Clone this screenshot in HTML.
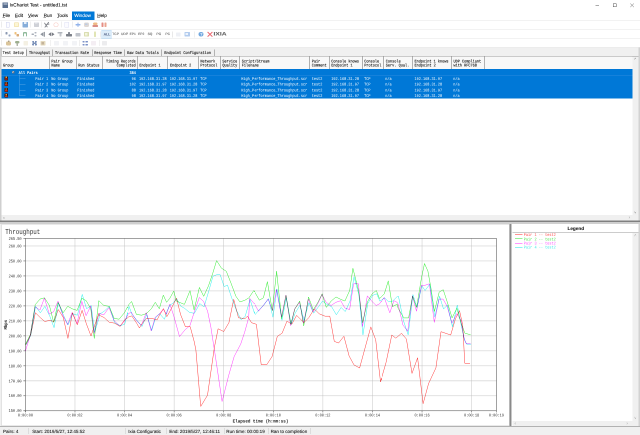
<!DOCTYPE html><html><head><meta charset="utf-8"><title>IxChariot Test - untitled1.tst</title><style>
html,body{margin:0;padding:0;background:#fff;}
body{width:640px;height:435px;overflow:hidden;position:relative;font-family:"Liberation Sans",sans-serif;}
#app{transform:scale(0.500000);transform-origin:0 0;will-change:transform;position:absolute;left:0;top:0;width:1280px;height:870px;overflow:hidden;}
#app div{position:absolute;}
.t{position:absolute;white-space:pre;line-height:1;text-rendering:geometricPrecision;transform:translateY(-50%);color:#000;}
.m{transform:translateY(calc(-50% + 2px)) scaleY(1.18);-webkit-text-stroke:0.18px currentColor;}
.w{-webkit-text-stroke:0;}
.s{font-family:"Liberation Sans",sans-serif;font-size:7.8px;-webkit-text-stroke:0.14px currentColor;}
.m{font-family:"Liberation Mono",monospace;font-size:7.1px;color:#111;}
.w{color:#fff;}
.b{font-weight:bold;}
svg{position:absolute;left:0;top:0;}
</style></head><body><div id="app">
<div style="left:5px;top:5.2px;width:11.2px;height:11.2px;background:#5a6f8f;"></div>
<div style="left:6.6px;top:6.8px;width:8px;height:2.4px;background:#cfd8e6;"></div>
<span class="t s" style="top:10.8px;left:19.2px;color:#000;font-size:9.5px;">IxChariot Test - untitled1.tst</span>
<div style="left:1191.4px;top:10.4px;width:6.8px;height:0.9px;background:#555;"></div>
<div style="left:1226.4px;top:7px;width:6.8px;height:6.8px;border:0.9px solid #555;box-sizing:border-box;"></div>
<svg width="1280" height="24" viewBox="0 0 640 12"><path d="M630.3 3.5 L633.9 7.1 M633.9 3.5 L630.3 7.1" stroke="#555" stroke-width="0.45" fill="none"/></svg>
<div style="left:144px;top:22.6px;width:44.6px;height:17.2px;background:#0078d7;"></div>
<span class="t s" style="top:31px;left:5.2px;color:#000;font-size:9.4px;">File</span>
<span class="t s" style="top:31px;left:30px;color:#000;font-size:9.4px;">Edit</span>
<span class="t s" style="top:31px;left:56px;color:#000;font-size:9.4px;">View</span>
<span class="t s" style="top:31px;left:87.2px;color:#000;font-size:9.4px;">Run</span>
<span class="t s" style="top:31px;left:114px;color:#000;font-size:9.4px;">Tools</span>
<span class="t s" style="top:31px;left:148.4px;color:#fff;font-size:9.4px;">Window</span>
<span class="t s" style="top:31px;left:194.4px;color:#000;font-size:9.4px;">Help</span>
<div style="left:5.2px;top:35px;width:4.4px;height:0.7px;background:#444;"></div>
<div style="left:30px;top:35px;width:4.8px;height:0.7px;background:#444;"></div>
<div style="left:56px;top:35px;width:5px;height:0.7px;background:#444;"></div>
<div style="left:87.2px;top:35px;width:5.2px;height:0.7px;background:#444;"></div>
<div style="left:114px;top:35px;width:4.4px;height:0.7px;background:#444;"></div>
<div style="left:194.4px;top:35px;width:5.4px;height:0.7px;background:#444;"></div>
<div style="left:0px;top:40.2px;width:1280px;height:1px;background:#e4e4e4;"></div>
<div style="left:0px;top:58.2px;width:1280px;height:1px;background:#e4e4e4;"></div>
<div style="left:0px;top:76px;width:1280px;height:1px;background:#e4e4e4;"></div>
<div style="left:0px;top:93.6px;width:1280px;height:1px;background:#e9e9e9;"></div>
<div style="left:2.8px;top:43px;width:1.2px;height:12px;background:#d8d8d8;"></div>
<div style="left:2.8px;top:61px;width:1.2px;height:12px;background:#d8d8d8;"></div>
<div style="left:2.8px;top:79px;width:1.2px;height:12px;background:#d8d8d8;"></div>
<div style="left:0;top:0;width:1280px;height:94px;opacity:0.68;">
<div style="left:11.6px;top:44.2px;width:7.6px;height:10.4px;background:#fbfbff;border-radius:0.8px;border:1px solid #b9bfe6;box-sizing:border-box;"></div>
<div style="left:28.4px;top:45px;width:10px;height:8.8px;background:#fbf0c0;border-radius:1.2px;border:1px solid #e3c766;box-sizing:border-box;"></div>
<div style="left:45.2px;top:44.2px;width:10.4px;height:10.4px;background:#4f88c9;border-radius:1.2px;"></div>
<div style="left:48px;top:44.2px;width:4.8px;height:4px;background:#dbe8f6;"></div>
<div style="left:61px;top:43.4px;width:0.8px;height:12px;background:#cfcfcf;"></div>
<div style="left:67.6px;top:45.4px;width:10px;height:8.4px;background:#b9bcc4;border-radius:1.2px;"></div>
<div style="left:70px;top:43.8px;width:5.2px;height:3.2px;background:#e6e8ee;"></div>
<div style="left:83.4px;top:43.4px;width:0.8px;height:12px;background:#cfcfcf;"></div>
<svg width="1280" height="96" viewBox="0 0 640 48"><path d="M45 27.099999999999998 L48.6 22.3 M44.6 23.099999999999998 L47.2 26.9 M46.6 24.5 L49 24.099999999999998" stroke="#4a4f58" stroke-width="0.9" fill="none" stroke-linecap="round"/></svg>
<div style="left:107px;top:44.6px;width:9.6px;height:9.6px;border-radius:4.8px;border:1.6px solid #f3a49a;box-sizing:border-box;"></div>
<div style="left:122.4px;top:43.4px;width:0.8px;height:12px;background:#cfcfcf;"></div>
<div style="left:128.6px;top:44.2px;width:9.2px;height:10.4px;background:#fafaff;border-radius:0.8px;border:1px solid #cfd0ee;box-sizing:border-box;"></div>
<div style="left:144px;top:43.4px;width:0.8px;height:12px;background:#cfcfcf;"></div>
<div style="left:151.2px;top:48.2px;width:9.6px;height:2.6px;background:#5f8fe0;border-radius:1.2px;"></div>
<div style="left:154.8px;top:44.6px;width:2.6px;height:9.6px;background:#5f8fe0;border-radius:1.2px;"></div>
<div style="left:167.6px;top:44.6px;width:10px;height:9.2px;background:#cfc6c2;border-radius:3px;"></div>
<div style="left:170px;top:46.6px;width:5.2px;height:3.2px;background:#9fb6d6;"></div>
<div style="left:185.6px;top:44.6px;width:9.6px;height:5.2px;background:#e79a4a;border-radius:2.6px;"></div>
<div style="left:185.2px;top:49.8px;width:10.4px;height:4.4px;background:#c9564a;border-radius:1.2px;"></div>
<div style="left:203.2px;top:44.6px;width:4.2px;height:9.6px;background:#d9584a;border-radius:1.2px;"></div>
<div style="left:208.6px;top:44.6px;width:4.2px;height:9.6px;background:#e07a5a;border-radius:1.2px;"></div>
<div style="left:10.8px;top:64.2px;width:4.4px;height:4.4px;background:#54688c;border-radius:1.2px;"></div>
<div style="left:16.8px;top:69px;width:4.4px;height:4.4px;background:#6a7da0;border-radius:1.2px;"></div>
<div style="left:28.6px;top:63.8px;width:4.8px;height:5.2px;background:#e8a33c;border-radius:1.2px;"></div>
<div style="left:32.8px;top:67.8px;width:5.2px;height:5.6px;background:#c9853a;border-radius:1.2px;"></div>
<div style="left:45.6px;top:63.8px;width:8.8px;height:9.6px;background:#5c9a6c;border-radius:2px;"></div>
<div style="left:48.4px;top:66.6px;width:3.2px;height:6.8px;background:#fff;"></div>
<div style="left:63.2px;top:67.4px;width:4.4px;height:2.6px;background:#7f8796;border-radius:1.2px;"></div>
<div style="left:69.2px;top:64px;width:3.4px;height:3px;background:#8a92a0;border-radius:1.2px;"></div>
<div style="left:69.2px;top:70.4px;width:3.4px;height:3px;background:#8a92a0;border-radius:1.2px;"></div>
<svg width="1280" height="96" viewBox="0 0 640 48"><path d="M43.6 31.999999999999996 L40.3 34.3 L43.6 36.599999999999994 Z" fill="#5b6370"/><path d="M44.5 31.9 v4.8" stroke="#5b6370" stroke-width="0.9"/><path d="M51.1 32.3 L48.3 34.3 L51.1 36.3 Z M51.7 32.3 L54.5 34.3 L51.7 36.3 Z" fill="#3a3f4a"/></svg>
<div style="left:115.2px;top:64px;width:10px;height:2.8px;background:#8d939c;border-radius:1.2px;"></div>
<div style="left:119.2px;top:66.6px;width:4px;height:6.8px;background:#a9aeb6;border-radius:1.2px;"></div>
<div style="left:132.4px;top:68.2px;width:11.6px;height:5px;background:#3f4550;border-radius:1.2px;"></div>
<div style="left:136.4px;top:63.8px;width:3.6px;height:4.8px;background:#4d5360;border-radius:1.2px;"></div>
<div style="left:151.2px;top:66.2px;width:9.6px;height:6.8px;background:#a3a8b3;border-radius:1.2px;"></div>
<div style="left:168px;top:63.8px;width:9.6px;height:9.6px;background:#c9cf8c;border-radius:1.2px;"></div>
<div style="left:170.4px;top:66px;width:4.8px;height:5.2px;background:#eef0cf;"></div>
<div style="left:188.4px;top:63.4px;width:3.2px;height:10.8px;background:#d3d993;border-radius:1.2px;"></div>
<div style="left:201.2px;top:62.6px;width:0.8px;height:12px;background:#cfcfcf;"></div>
<div style="left:204.4px;top:60.6px;width:17.2px;height:16.2px;background:#cce4f7;outline:0.8px solid #9ccaf0;outline-offset:-0.8px;"></div>
<span class="t s" style="top:69px;left:207.2px;color:#0a1f55;font-size:7px;font-weight:bold;">ALL</span>
<span class="t s" style="top:69px;left:224.6px;color:#000;font-size:6.6px;">TCP</span>
<span class="t s" style="top:69px;left:242px;color:#000;font-size:6.6px;">UDP</span>
<span class="t s" style="top:69px;left:259.2px;color:#000;font-size:6.6px;">EP1</span>
<span class="t s" style="top:69px;left:276.2px;color:#000;font-size:6.6px;">EP2</span>
<span class="t s" style="top:69px;left:295.2px;color:#000;font-size:6.6px;">SQ</span>
<span class="t s" style="top:69px;left:312.8px;color:#000;font-size:6.6px;">PG</span>
<span class="t s" style="top:69px;left:330.8px;color:#000;font-size:6.6px;">PC</span>
<div style="left:344.4px;top:62.6px;width:0.8px;height:12px;background:#bdbdbd;"></div>
<div style="left:352px;top:64.6px;width:8.8px;height:8px;background:#e6e9f0;border-radius:1.2px;"></div>
<div style="left:369.2px;top:63.8px;width:10.4px;height:9.6px;background:#8fb4e6;border-radius:1.2px;"></div>
<div style="left:371.2px;top:65.8px;width:4.8px;height:4px;background:#e4eefb;"></div>
<div style="left:389.4px;top:62.6px;width:0.8px;height:12px;background:#cfcfcf;"></div>
<div style="left:397.2px;top:63.8px;width:9.6px;height:9.6px;background:#2f7fd0;border-radius:4.8px;"></div>
<span class="t s" style="top:68.8px;left:400.4px;color:#fff;font-size:7.2px;font-weight:bold;">?</span>
<svg width="1280" height="96" viewBox="0 0 640 48"><path d="M207.6 31.999999999999996 L212.4 36.599999999999994 M212.4 31.999999999999996 L207.6 36.599999999999994" stroke="#e0222f" stroke-width="1.0" fill="none"/></svg>
<span class="t s" style="top:68.7px;left:426.6px;color:#111;font-size:10px;font-weight:bold;transform-origin:0 50%;transform:translateY(-50%) scaleX(1.34);">IXIA</span>
<div style="left:12.4px;top:83.2px;width:9.6px;height:8px;background:#c9a86a;border-radius:2.4px;"></div>
<div style="left:15.6px;top:81px;width:3.6px;height:3.2px;background:#7b6a4a;border-radius:1.2px;"></div>
<div style="left:30.4px;top:81.6px;width:8.4px;height:5.2px;background:#6f8a5a;border-radius:2.4px;"></div>
<div style="left:32.8px;top:86.4px;width:3.2px;height:5.2px;background:#8a8f7a;border-radius:1.2px;"></div>
<div style="left:47.2px;top:82px;width:8.8px;height:9.2px;background:#efe9d6;border-radius:1.2px;"></div>
<div style="left:64px;top:81.6px;width:10px;height:9.6px;background:#3f5f9a;border-radius:2px;"></div>
<div style="left:67.8px;top:81.6px;width:2.4px;height:3.2px;background:#fff;"></div>
<div style="left:67.8px;top:88px;width:2.4px;height:3.2px;background:#fff;"></div>
<div style="left:64px;top:85.4px;width:2.4px;height:2px;background:#fff;"></div>
<div style="left:71.6px;top:85.4px;width:2.4px;height:2px;background:#fff;"></div>
<div style="left:80.8px;top:81.8px;width:10px;height:9.6px;background:#d9c9a0;border-radius:1.2px;"></div>
<div style="left:83.2px;top:84.4px;width:5.2px;height:4.4px;background:#a88f6a;"></div>
<div style="left:101.2px;top:80.4px;width:0.8px;height:12px;background:#d5d5d5;"></div>
<div style="left:108px;top:81.8px;width:10px;height:9.6px;background:#eceef2;border-radius:1.2px;"></div>
<div style="left:126px;top:81.8px;width:10px;height:9.6px;background:#eceef2;border-radius:1.2px;"></div>
<div style="left:143.6px;top:81.8px;width:10px;height:9.6px;background:#eceef2;border-radius:1.2px;"></div>
<div style="left:159px;top:80.4px;width:0.8px;height:12px;background:#cfcfcf;"></div>
<div style="left:164.8px;top:82.2px;width:10.8px;height:3px;background:#3f5fae;border-radius:1.2px;"></div>
<div style="left:164.8px;top:87.8px;width:10.8px;height:3px;background:#3f5fae;border-radius:1.2px;"></div>
<div style="left:169.4px;top:82.2px;width:1.6px;height:8.6px;background:#fff;"></div>
<div style="left:182.4px;top:81.8px;width:9.6px;height:9.6px;background:#efe6ee;border-radius:1.2px;"></div>
<div style="left:198px;top:80.4px;width:0.8px;height:12px;background:#d5d5d5;"></div>
<div style="left:204.4px;top:82px;width:9.6px;height:9.2px;background:#e4e4e6;border-radius:1.2px;"></div>
</div>
<div style="left:0px;top:95.2px;width:1280px;height:17.2px;background:#f0f0f0;"></div>
<div style="left:2.8px;top:96.4px;width:50px;height:16px;background:#fcfcfc;border:0.7px solid #c4c4c4;border-bottom:none;box-sizing:border-box;"></div>
<span class="t m" style="top:104.6px;left:5.2px;">Test Setup</span>
<span class="t m" style="top:104.6px;left:58px;">Throughput</span>
<span class="t m" style="top:104.6px;left:110px;">Transaction Rate</span>
<span class="t m" style="top:104.6px;left:188.4px;">Response Time</span>
<span class="t m" style="top:104.6px;left:254px;">Raw Data Totals</span>
<span class="t m" style="top:104.6px;left:328.4px;">Endpoint Configuration</span>
<div style="left:53.2px;top:98.8px;width:0.8px;height:12.8px;background:#777;"></div>
<div style="left:104.2px;top:98.8px;width:0.8px;height:12.8px;background:#777;"></div>
<div style="left:183.8px;top:98.8px;width:0.8px;height:12.8px;background:#777;"></div>
<div style="left:247.6px;top:98.8px;width:0.8px;height:12.8px;background:#777;"></div>
<div style="left:322.8px;top:98.8px;width:0.8px;height:12.8px;background:#777;"></div>
<div style="left:428.2px;top:98.8px;width:0.8px;height:12.8px;background:#777;"></div>
<div style="left:2.8px;top:112.2px;width:1274px;height:26.2px;background:#f8f8f8;border-top:1.1px solid #959595;box-sizing:border-box;"></div>
<div style="left:2.8px;top:113px;width:1261.6px;height:1.2px;background:#fff;"></div>
<div style="left:98.2px;top:112.8px;width:1.1px;height:26px;background:#666;"></div>
<div style="left:99.3px;top:112.8px;width:1px;height:26px;background:#fff;"></div>
<div style="left:151.6px;top:112.8px;width:1.1px;height:26px;background:#666;"></div>
<div style="left:152.7px;top:112.8px;width:1px;height:26px;background:#fff;"></div>
<div style="left:204.2px;top:112.8px;width:1.1px;height:26px;background:#666;"></div>
<div style="left:205.3px;top:112.8px;width:1px;height:26px;background:#fff;"></div>
<div style="left:274px;top:112.8px;width:1.1px;height:26px;background:#666;"></div>
<div style="left:275.1px;top:112.8px;width:1px;height:26px;background:#fff;"></div>
<div style="left:334.4px;top:112.8px;width:1.1px;height:26px;background:#666;"></div>
<div style="left:335.5px;top:112.8px;width:1px;height:26px;background:#fff;"></div>
<div style="left:396.6px;top:112.8px;width:1.1px;height:26px;background:#666;"></div>
<div style="left:397.7px;top:112.8px;width:1px;height:26px;background:#fff;"></div>
<div style="left:440px;top:112.8px;width:1.1px;height:26px;background:#666;"></div>
<div style="left:441.1px;top:112.8px;width:1px;height:26px;background:#fff;"></div>
<div style="left:478.4px;top:112.8px;width:1.1px;height:26px;background:#666;"></div>
<div style="left:479.5px;top:112.8px;width:1px;height:26px;background:#fff;"></div>
<div style="left:618.6px;top:112.8px;width:1.1px;height:26px;background:#666;"></div>
<div style="left:619.7px;top:112.8px;width:1px;height:26px;background:#fff;"></div>
<div style="left:657.8px;top:112.8px;width:1.1px;height:26px;background:#666;"></div>
<div style="left:658.9px;top:112.8px;width:1px;height:26px;background:#fff;"></div>
<div style="left:724.4px;top:112.8px;width:1.1px;height:26px;background:#666;"></div>
<div style="left:725.5px;top:112.8px;width:1px;height:26px;background:#fff;"></div>
<div style="left:767.2px;top:112.8px;width:1.1px;height:26px;background:#666;"></div>
<div style="left:768.3px;top:112.8px;width:1px;height:26px;background:#fff;"></div>
<div style="left:824.2px;top:112.8px;width:1.1px;height:26px;background:#666;"></div>
<div style="left:825.3px;top:112.8px;width:1px;height:26px;background:#fff;"></div>
<div style="left:902.2px;top:112.8px;width:1.1px;height:26px;background:#666;"></div>
<div style="left:903.3px;top:112.8px;width:1px;height:26px;background:#fff;"></div>
<div style="left:968.2px;top:112.8px;width:1.1px;height:26px;background:#666;"></div>
<div style="left:969.3px;top:112.8px;width:1px;height:26px;background:#fff;"></div>
<span class="t m" style="top:130.2px;left:6px;">Group</span>
<span class="t m" style="top:121.6px;left:102.8px;">Pair Group</span>
<span class="t m" style="top:130.2px;left:102.8px;">Name</span>
<span class="t m" style="top:130.2px;left:156.4px;">Run Status</span>
<span class="t m" style="top:130.2px;left:278.8px;">Endpoint 1</span>
<span class="t m" style="top:130.2px;left:340px;">Endpoint 2</span>
<span class="t m" style="top:121.6px;left:400.8px;">Network</span>
<span class="t m" style="top:130.2px;left:400.8px;">Protocol</span>
<span class="t m" style="top:121.6px;left:444.8px;">Service</span>
<span class="t m" style="top:130.2px;left:444.8px;">Quality</span>
<span class="t m" style="top:121.6px;left:483.4px;">Script/Stream</span>
<span class="t m" style="top:130.2px;left:483.4px;">Filename</span>
<span class="t m" style="top:121.6px;left:623.4px;">Pair</span>
<span class="t m" style="top:130.2px;left:623.4px;">Comment</span>
<span class="t m" style="top:121.6px;left:662.6px;">Console knows</span>
<span class="t m" style="top:130.2px;left:662.6px;">Endpoint 1</span>
<span class="t m" style="top:121.6px;left:728.4px;">Console</span>
<span class="t m" style="top:130.2px;left:728.4px;">Protocol</span>
<span class="t m" style="top:121.6px;left:771.6px;">Console</span>
<span class="t m" style="top:130.2px;left:771.6px;">Serv. Qual.</span>
<span class="t m" style="top:121.6px;left:829px;">Endpoint 1 knows</span>
<span class="t m" style="top:130.2px;left:829px;">Endpoint 2</span>
<span class="t m" style="top:121.6px;left:907px;">UDP Compliant</span>
<span class="t m" style="top:130.2px;left:907px;">with RFC768</span>
<span class="t m" style="top:121.6px;right:1008.4px;">Timing Records</span>
<span class="t m" style="top:130.2px;right:1008.4px;">Completed</span>
<div style="left:2.6px;top:138.4px;width:1262px;height:58.2px;background:#0078d7;"></div>
<div style="left:3.2px;top:149.8px;width:1261.4px;height:0.7px;background:#2a8be0;"></div>
<div style="left:24.2px;top:142.4px;width:5px;height:5px;background:#e8eef6;border:0.8px solid #5a6a80;box-sizing:border-box;"></div>
<div style="left:25.6px;top:144.6px;width:2.2px;height:0.8px;background:#223;"></div>
<span class="t m w b" style="top:145px;left:37.2px;">All Pairs</span>
<span class="t m w b" style="top:145px;right:1008.2px;">384</span>
<div style="left:39.2px;top:149.2px;width:0.8px;height:42.4px;background:#b8d6f3;opacity:.45;"></div>
<div style="left:39.2px;top:156.6px;width:11.6px;height:0.8px;background:#b8d6f3;opacity:.45;"></div>
<div style="left:9.4px;top:152.6px;width:6.2px;height:8px;background:#3a1512;border-radius:1.2px;"></div>
<div style="left:10.6px;top:153.4px;width:3.8px;height:2.4px;background:#e89a2a;"></div>
<div style="left:10.4px;top:156.8px;width:4.2px;height:2.6px;background:#c8301c;"></div>
<span class="t m w" style="top:156.6px;right:1183.6px;">Pair 1</span>
<span class="t m w" style="top:156.6px;left:102.6px;">No Group</span>
<span class="t m w" style="top:156.6px;left:154.6px;">Finished</span>
<span class="t m w" style="top:156.6px;right:1008.2px;">96</span>
<span class="t m w" style="top:156.6px;left:278px;">192.168.31.28</span>
<span class="t m w" style="top:156.6px;left:339.4px;">192.168.31.97</span>
<span class="t m w" style="top:156.6px;left:400.6px;">TCP</span>
<span class="t m w" style="top:156.6px;left:482.6px;">High_Performance_Throughput.scr</span>
<span class="t m w" style="top:156.6px;left:623.4px;">test2</span>
<span class="t m w" style="top:156.6px;left:662.6px;">192.168.31.28</span>
<span class="t m w" style="top:156.6px;left:728.2px;">TCP</span>
<span class="t m w" style="top:156.6px;left:770.6px;">n/a</span>
<span class="t m w" style="top:156.6px;left:829px;">192.168.31.97</span>
<span class="t m w" style="top:156.6px;left:906.4px;">n/a</span>
<div style="left:39.2px;top:168.2px;width:11.6px;height:0.8px;background:#b8d6f3;opacity:.45;"></div>
<div style="left:9.4px;top:164.2px;width:6.2px;height:8px;background:#3a1512;border-radius:1.2px;"></div>
<div style="left:10.6px;top:165px;width:3.8px;height:2.4px;background:#e89a2a;"></div>
<div style="left:10.4px;top:168.4px;width:4.2px;height:2.6px;background:#c8301c;"></div>
<span class="t m w" style="top:168.2px;right:1183.6px;">Pair 2</span>
<span class="t m w" style="top:168.2px;left:102.6px;">No Group</span>
<span class="t m w" style="top:168.2px;left:154.6px;">Finished</span>
<span class="t m w" style="top:168.2px;right:1008.2px;">102</span>
<span class="t m w" style="top:168.2px;left:278px;">192.168.31.97</span>
<span class="t m w" style="top:168.2px;left:339.4px;">192.168.31.28</span>
<span class="t m w" style="top:168.2px;left:400.6px;">TCP</span>
<span class="t m w" style="top:168.2px;left:482.6px;">High_Performance_Throughput.scr</span>
<span class="t m w" style="top:168.2px;left:623.4px;">test2</span>
<span class="t m w" style="top:168.2px;left:662.6px;">192.168.31.97</span>
<span class="t m w" style="top:168.2px;left:728.2px;">TCP</span>
<span class="t m w" style="top:168.2px;left:770.6px;">n/a</span>
<span class="t m w" style="top:168.2px;left:829px;">192.168.31.28</span>
<span class="t m w" style="top:168.2px;left:906.4px;">n/a</span>
<div style="left:39.2px;top:179.8px;width:11.6px;height:0.8px;background:#b8d6f3;opacity:.45;"></div>
<div style="left:9.4px;top:175.8px;width:6.2px;height:8px;background:#3a1512;border-radius:1.2px;"></div>
<div style="left:10.6px;top:176.6px;width:3.8px;height:2.4px;background:#e89a2a;"></div>
<div style="left:10.4px;top:180px;width:4.2px;height:2.6px;background:#c8301c;"></div>
<span class="t m w" style="top:179.8px;right:1183.6px;">Pair 3</span>
<span class="t m w" style="top:179.8px;left:102.6px;">No Group</span>
<span class="t m w" style="top:179.8px;left:154.6px;">Finished</span>
<span class="t m w" style="top:179.8px;right:1008.2px;">88</span>
<span class="t m w" style="top:179.8px;left:278px;">192.168.31.28</span>
<span class="t m w" style="top:179.8px;left:339.4px;">192.168.31.97</span>
<span class="t m w" style="top:179.8px;left:400.6px;">TCP</span>
<span class="t m w" style="top:179.8px;left:482.6px;">High_Performance_Throughput.scr</span>
<span class="t m w" style="top:179.8px;left:623.4px;">test2</span>
<span class="t m w" style="top:179.8px;left:662.6px;">192.168.31.28</span>
<span class="t m w" style="top:179.8px;left:728.2px;">TCP</span>
<span class="t m w" style="top:179.8px;left:770.6px;">n/a</span>
<span class="t m w" style="top:179.8px;left:829px;">192.168.31.97</span>
<span class="t m w" style="top:179.8px;left:906.4px;">n/a</span>
<div style="left:39.2px;top:191.4px;width:11.6px;height:0.8px;background:#b8d6f3;opacity:.45;"></div>
<div style="left:9.4px;top:187.4px;width:6.2px;height:8px;background:#3a1512;border-radius:1.2px;"></div>
<div style="left:10.6px;top:188.2px;width:3.8px;height:2.4px;background:#e89a2a;"></div>
<div style="left:10.4px;top:191.6px;width:4.2px;height:2.6px;background:#c8301c;"></div>
<span class="t m w" style="top:191.4px;right:1183.6px;">Pair 4</span>
<span class="t m w" style="top:191.4px;left:102.6px;">No Group</span>
<span class="t m w" style="top:191.4px;left:154.6px;">Finished</span>
<span class="t m w" style="top:191.4px;right:1008.2px;">98</span>
<span class="t m w" style="top:191.4px;left:278px;">192.168.31.97</span>
<span class="t m w" style="top:191.4px;left:339.4px;">192.168.31.28</span>
<span class="t m w" style="top:191.4px;left:400.6px;">TCP</span>
<span class="t m w" style="top:191.4px;left:482.6px;">High_Performance_Throughput.scr</span>
<span class="t m w" style="top:191.4px;left:623.4px;">test2</span>
<span class="t m w" style="top:191.4px;left:662.6px;">192.168.31.97</span>
<span class="t m w" style="top:191.4px;left:728.2px;">TCP</span>
<span class="t m w" style="top:191.4px;left:770.6px;">n/a</span>
<span class="t m w" style="top:191.4px;left:829px;">192.168.31.28</span>
<span class="t m w" style="top:191.4px;left:906.4px;">n/a</span>
<div style="left:0px;top:95.2px;width:2.6px;height:353.2px;background:#cfcfcf;"></div>
<div style="left:1264.6px;top:112.8px;width:12.6px;height:328.8px;background:#f0f0f0;"></div>
<div style="left:1277px;top:95.2px;width:3px;height:353.2px;background:#d2d2d2;"></div>
<div style="left:3px;top:430.2px;width:1274.2px;height:11.4px;background:#f0f0f0;"></div>
<span class="t s" style="top:435.8px;left:6.4px;color:#888;font-size:8px;">‹</span>
<span class="t s" style="top:435.4px;left:1257.6px;color:#aaa;font-size:8px;">›</span>
<span class="t s" style="top:118.4px;left:1268.2px;color:#999;font-size:7.2px;">˄</span>
<span class="t s" style="top:425px;left:1268.2px;color:#999;font-size:7.2px;">˅</span>
<div style="left:0px;top:441.4px;width:1280px;height:2.6px;background:#808080;"></div>
<div style="left:0px;top:444px;width:1280px;height:4.4px;background:#cfcfcf;"></div>
<div style="left:0px;top:448.4px;width:1280px;height:404.6px;background:#f0f0f0;"></div>
<div style="left:2.6px;top:448.4px;width:1015.2px;height:404px;background:#fff;border:0.8px solid #d4d4d4;box-sizing:border-box;"></div>
<div style="left:1017.8px;top:448.4px;width:1.6px;height:404.6px;background:#e4e4e4;"></div>
<div style="left:1019.4px;top:448.4px;width:2.4px;height:404.6px;background:#8a8a8a;"></div>
<div style="left:1021.8px;top:448.4px;width:2.2px;height:404.6px;background:#c8c8c8;"></div>
<div style="left:1024px;top:448.4px;width:256px;height:404.6px;background:#fff;"></div>
<div style="left:1024.6px;top:464.6px;width:255.4px;height:1px;background:#9a9a9a;"></div>
<div style="left:1024.6px;top:465.6px;width:240.4px;height:376.4px;background:#fff;"></div>
<div style="left:1264.8px;top:465.6px;width:12.8px;height:376.8px;background:#f0f0f0;"></div>
<div style="left:1024.6px;top:841.8px;width:252.8px;height:10.6px;background:#f0f0f0;"></div>
<div style="left:1277.2px;top:448.4px;width:2.8px;height:404.6px;background:#d2d2d2;"></div>
<span class="t s b" style="top:456.6px;left:1151.6px;color:#111;font-size:9.4px;transform:translate(-50%,-50%);">Legend</span>
<span class="t s" style="top:470.8px;left:1268.4px;color:#aaa;font-size:7.2px;">˄</span>
<span class="t s" style="top:836px;left:1268.4px;color:#aaa;font-size:7.2px;">˅</span>
<span class="t s" style="top:847px;left:1029px;color:#aaa;font-size:8px;">‹</span>
<span class="t s" style="top:847px;left:1253px;color:#aaa;font-size:8px;">›</span>
<div style="left:1030px;top:469.1px;width:14.6px;height:0.9px;background:#ff2a2a;"></div>
<span class="t m" style="top:469.4px;left:1047.6px;color:#ff2a2a;-webkit-text-stroke:0;opacity:.85;">Pair 1 -- test2</span>
<div style="left:1030px;top:477.3px;width:14.6px;height:0.9px;background:#2fe02f;"></div>
<span class="t m" style="top:477.6px;left:1047.6px;color:#2fe02f;-webkit-text-stroke:0;opacity:.85;">Pair 2 -- test2</span>
<div style="left:1030px;top:485.5px;width:14.6px;height:0.9px;background:#ff30ff;"></div>
<span class="t m" style="top:485.8px;left:1047.6px;color:#ff30ff;-webkit-text-stroke:0;opacity:.85;">Pair 3 -- test2</span>
<div style="left:1030px;top:493.7px;width:14.6px;height:0.9px;background:#20e6e6;"></div>
<span class="t m" style="top:494px;left:1047.6px;color:#20e6e6;-webkit-text-stroke:0;opacity:.85;">Pair 4 -- test2</span>
<svg width="1280" height="870" viewBox="0 0 640 435"><g stroke="#bcbcbc" stroke-width="0.42" fill="none"><path d="M25.4 395.81 H496.5"/><path d="M25.4 380.83 H496.5"/><path d="M25.4 365.85 H496.5"/><path d="M25.4 350.86 H496.5"/><path d="M25.4 335.88 H496.5"/><path d="M25.4 320.89 H496.5"/><path d="M25.4 305.91 H496.5"/><path d="M25.4 290.92 H496.5"/><path d="M25.4 275.94 H496.5"/><path d="M25.4 260.95 H496.5"/><path d="M25.4 245.97 H496.5"/><path d="M74.98 238.4 V410.8"/><path d="M124.56 238.4 V410.8"/><path d="M174.14 238.4 V410.8"/><path d="M223.72 238.4 V410.8"/><path d="M273.3 238.4 V410.8"/><path d="M322.88 238.4 V410.8"/><path d="M372.46 238.4 V410.8"/><path d="M422.04 238.4 V410.8"/><path d="M471.62 238.4 V410.8"/></g><g stroke="#444" stroke-width="0.5" fill="none"><path d="M25.4 238.4 V412.0 M23.4 410.8 H496.5 V238.4 H23.4"/><path d="M23.4 410.8 H25.4"/><path d="M23.4 395.81 H25.4"/><path d="M23.4 380.83 H25.4"/><path d="M23.4 365.85 H25.4"/><path d="M23.4 350.86 H25.4"/><path d="M23.4 335.88 H25.4"/><path d="M23.4 320.89 H25.4"/><path d="M23.4 305.91 H25.4"/><path d="M23.4 290.92 H25.4"/><path d="M23.4 275.94 H25.4"/><path d="M23.4 260.95 H25.4"/><path d="M23.4 245.97 H25.4"/><path d="M25.4 410.8 v1.6"/><path d="M74.98 410.8 v1.6"/><path d="M124.56 410.8 v1.6"/><path d="M174.14 410.8 v1.6"/><path d="M223.72 410.8 v1.6"/><path d="M273.3 410.8 v1.6"/><path d="M322.88 410.8 v1.6"/><path d="M372.46 410.8 v1.6"/><path d="M422.04 410.8 v1.6"/><path d="M471.62 410.8 v1.6"/><path d="M496.41 410.8 v1.6"/></g><g fill="none" stroke-width="0.5" stroke-linejoin="round"><polyline stroke="#ff3b3b" style="mix-blend-mode:multiply" points="25.7,344.9 30.6,335.2 35.4,312.7 40.2,317.5 44.7,321.5 49.6,320.4 53.9,321.5 58.3,309.5 63.3,317.5 67.9,338.4 72.4,312.7 77.3,324.8 82.1,310.3 86.4,323.9 91.0,336.0 94.5,325.6 99.0,313.5 99.1,315.1 104.0,317.5 109.3,322.3 114.4,323.1 120.1,326.4 124.6,319.9 128.9,316.7 131.8,315.9 136.6,323.1 139.4,328.0 141.8,323.9 146.6,318.3 151.5,318.3 157.1,319.9 159.5,315.1 163.5,308.6 166.8,316.7 170.0,311.1 176.5,298.2 180.6,314.6 185.4,326.7 190.2,326.7 194.3,342.0 195.9,350.1 200.7,406.5 207.5,395.2 214.4,347.3 218.1,328.8 223.7,331.5 228.9,322.7 233.7,299.3 238.5,317.8 245.1,318.6 247.5,316.2 251.5,322.7 256.4,324.3 261.2,364.6 266.8,364.6 272.1,356.5 277.3,336.4 282.1,333.2 287.0,321.1 291.8,324.2 296.6,315.4 300.7,319.4 303.9,322.6 308.7,317.8 314.3,308.9 319.2,313.8 325.1,316.2 329.8,316.2 331.4,325.3 334.3,341.4 338.6,343.0 343.9,336.3 349.1,355.9 353.9,364.8 359.6,368.0 370.8,326.9 375.7,339.8 380.5,381.7 386.1,362.3 391.8,335.0 395.8,338.2 401.5,333.3 406.4,339.0 412.0,373.4 417.6,357.8 423.1,403.7 428.6,383.5 435.9,367.9 441.0,331.7 450.7,335.0 455.5,318.6 459.5,310.6 462.7,325.1 464.8,363.3 470.0,363.3"/><polyline stroke="#35ee35" style="mix-blend-mode:multiply" points="25.5,344.2 30.4,334.5 35.2,304.7 40.0,299.1 44.5,297.8 49.4,305.5 53.7,322.4 58.1,302.3 63.1,312.8 67.7,306.3 72.2,308.8 77.1,310.4 81.9,298.3 86.2,300.7 90.8,308.8 94.3,338.5 98.8,300.7 103.8,305.5 109.1,306.3 114.2,318.4 119.1,319.2 124.4,312.8 128.7,304.7 131.6,301.5 136.4,314.4 141.6,315.2 146.4,313.6 151.3,308.8 155.3,302.3 159.3,308.8 163.3,295.1 166.6,302.3 169.8,298.3 173.8,291.0 176.3,301.1 180.4,302.7 184.4,304.4 190.0,290.7 194.1,310.0 199.4,287.4 203.7,296.3 208.5,285.8 212.6,273.8 216.6,260.6 221.4,268.1 226.3,271.3 231.1,283.4 235.9,296.3 239.9,301.9 244.8,300.3 248.9,297.8 253.8,290.5 259.4,300.2 263.4,297.8 267.4,281.7 272.3,310.7 276.6,271.2 281.6,318.7 286.0,295.4 290.8,324.4 294.8,309.1 299.7,301.0 303.7,326.0 308.5,297.0 313.3,309.9 318.2,301.8 322.2,293.8 322.3,294.6 326.3,307.4 331.2,301.0 336.0,297.0 340.8,299.4 344.9,301.0 349.7,290.5 352.9,268.3 358.5,290.5 362.6,322.7 367.4,301.8 372.2,293.8 376.3,290.5 379.5,298.6 384.3,293.8 388.3,280.9 392.4,306.6 397.2,304.2 398.1,308.2 403.8,317.9 408.6,317.9 412.6,296.2 416.6,307.4 421.5,277.7 424.5,263.5 427.9,271.2 431.1,288.9 434.4,311.5 439.2,292.1 443.2,289.7 447.2,301.8 452.1,317.9 456.9,308.2 460.9,322.7 464.9,333.2 470.6,334.8"/><polyline stroke="#ff3bff" style="mix-blend-mode:multiply" points="25.4,351.1 30.3,335.0 35.1,306.8 39.9,310.1 44.4,298.0 49.3,314.1 53.6,311.7 58.0,301.2 63.0,315.7 67.6,324.6 72.1,312.5 77.0,323.7 81.8,301.2 86.1,315.7 90.7,306.0 94.2,333.4 98.7,314.1 98.8,313.3 103.7,314.9 109.0,307.6 114.1,320.5 119.8,326.2 124.3,321.3 128.6,313.3 131.5,312.5 136.3,320.5 141.5,325.4 146.3,312.5 151.2,331.0 155.2,317.3 159.2,314.1 163.2,309.3 166.5,314.1 169.7,304.4 169.8,304.0 173.8,316.0 179.5,336.6 185.1,329.7 189.9,325.7 194.0,312.8 199.3,297.5 203.6,301.5 207.6,311.2 210.9,327.3 214.1,348.2 214.9,353.1 222.1,401.5 228.6,375.7 234.2,356.4 240.7,344.1 244.7,332.1 248.7,317.6 249.6,298.3 254.5,303.9 258.5,311.2 263.3,305.5 268.1,299.1 272.5,310.4 276.5,289.4 281.5,316.8 285.9,295.1 290.7,325.7 294.7,308.7 299.6,302.3 303.6,323.2 308.4,299.1 313.2,312.0 318.1,303.1 322.1,294.3 322.2,295.1 326.2,302.3 331.1,305.5 335.9,302.3 340.7,300.7 344.8,307.9 349.6,309.6 353.6,283.8 358.4,283.8 362.5,326.5 367.3,295.9 372.1,301.5 376.2,305.5 379.4,303.9 384.2,297.5 389.8,312.8 393.9,300.7 397.1,302.3 398.0,303.9 402.9,324.9 407.7,331.3 412.5,295.9 416.5,311.2 421.4,285.4 424.6,285.4 429.4,283.8 434.3,322.4 439.1,299.1 443.1,299.1 447.1,306.3 452.0,323.2 456.8,313.6 460.8,320.0 464.1,338.1 466.3,343.8 470.6,343.8"/><polyline stroke="#2ff0f0" style="mix-blend-mode:multiply" points="25.85,345.05 30.75,335.35 35.55,306.35 40.35,312.85 44.85,306.35 49.75,316.05 54.05,327.65 58.45,303.15 63.45,315.25 68.05,324.95 72.55,313.65 77.45,315.25 82.25,294.35 86.55,308.75 91.15,305.55 94.65,332.15 99.15,317.65 99.25,314.45 104.15,311.25 109.45,306.35 114.55,322.45 120.25,325.75 124.75,324.05 129.05,306.35 131.95,314.45 136.75,320.05 141.95,326.55 146.75,314.45 151.65,330.55 155.65,317.65 159.65,313.65 164.45,319.25 166.95,311.25 170.15,304.75 172.65,303.55 176.65,298.75 180.75,306.05 184.75,308.45 189.55,312.45 194.45,313.25 199.75,303.55 204.05,306.85 208.85,290.75 212.95,276.25 216.95,274.65 220.15,274.65 224.15,286.65 227.45,285.05 231.45,297.15 236.25,310.05 241.15,319.65 245.15,316.45 250.05,299.45 254.95,314.75 258.95,309.95 263.75,305.05 268.55,298.65 272.95,317.15 276.95,288.95 281.95,320.35 286.35,297.85 291.15,324.35 295.15,313.15 300.05,305.05 304.05,320.35 308.85,302.65 313.65,313.15 318.55,306.65 322.55,301.05 322.65,301.05 326.65,304.25 331.55,306.65 336.35,314.75 341.15,307.45 345.25,311.55 350.05,301.05 354.05,276.85 358.85,294.65 362.95,334.85 367.75,303.45 372.55,295.45 376.65,293.75 379.85,301.05 384.65,297.85 388.65,301.85 392.75,301.05 397.55,296.25 398.45,296.25 403.35,320.35 408.15,334.85 412.95,294.65 416.95,307.45 421.85,285.75 425.05,290.55 429.85,284.15 434.75,317.15 439.55,296.25 443.55,309.05 447.55,305.05 452.45,326.85 457.25,305.05 461.25,325.25 464.55,340.45 466.75,344.15 471.05,344.15"/></g><g font-family="Liberation Mono, monospace" fill="#333" style="text-rendering:geometricPrecision"><text transform="translate(21.6,239.83) scale(1,1.2)" font-size="3.62" text-anchor="end">265.50</text><text transform="translate(21.6,412.23) scale(1,1.2)" font-size="3.62" text-anchor="end">150.00</text><text transform="translate(21.6,397.24) scale(1,1.2)" font-size="3.62" text-anchor="end">160.00</text><text transform="translate(21.6,382.26) scale(1,1.2)" font-size="3.62" text-anchor="end">170.00</text><text transform="translate(21.6,367.28) scale(1,1.2)" font-size="3.62" text-anchor="end">180.00</text><text transform="translate(21.6,352.29) scale(1,1.2)" font-size="3.62" text-anchor="end">190.00</text><text transform="translate(21.6,337.31) scale(1,1.2)" font-size="3.62" text-anchor="end">200.00</text><text transform="translate(21.6,322.32) scale(1,1.2)" font-size="3.62" text-anchor="end">210.00</text><text transform="translate(21.6,307.34) scale(1,1.2)" font-size="3.62" text-anchor="end">220.00</text><text transform="translate(21.6,292.35) scale(1,1.2)" font-size="3.62" text-anchor="end">230.00</text><text transform="translate(21.6,277.37) scale(1,1.2)" font-size="3.62" text-anchor="end">240.00</text><text transform="translate(21.6,262.38) scale(1,1.2)" font-size="3.62" text-anchor="end">250.00</text><text transform="translate(21.6,247.4) scale(1,1.2)" font-size="3.62" text-anchor="end">260.00</text><text transform="translate(25.4,416.43) scale(1,1.2)" font-size="3.62" text-anchor="middle">0:00:00</text><text transform="translate(74.98,416.43) scale(1,1.2)" font-size="3.62" text-anchor="middle">0:00:02</text><text transform="translate(124.56,416.43) scale(1,1.2)" font-size="3.62" text-anchor="middle">0:00:04</text><text transform="translate(174.14,416.43) scale(1,1.2)" font-size="3.62" text-anchor="middle">0:00:06</text><text transform="translate(223.72,416.43) scale(1,1.2)" font-size="3.62" text-anchor="middle">0:00:08</text><text transform="translate(273.3,416.43) scale(1,1.2)" font-size="3.62" text-anchor="middle">0:00:10</text><text transform="translate(322.88,416.43) scale(1,1.2)" font-size="3.62" text-anchor="middle">0:00:12</text><text transform="translate(372.46,416.43) scale(1,1.2)" font-size="3.62" text-anchor="middle">0:00:14</text><text transform="translate(422.04,416.43) scale(1,1.2)" font-size="3.62" text-anchor="middle">0:00:16</text><text transform="translate(471.62,416.43) scale(1,1.2)" font-size="3.62" text-anchor="middle">0:00:18</text><text transform="translate(496.41,416.43) scale(1,1.2)" font-size="3.62" text-anchor="middle">0:00:19</text><text transform="translate(260.5,422.54) scale(1,1.1)" font-size="4.23" text-anchor="middle" font-weight="bold" fill="#222">Elapsed time (h:mm:ss)</text><text transform="translate(7.1,329.5) rotate(-90) scale(1,1.1)" font-size="4.0" font-weight="bold" fill="#222">Mbps</text><text transform="translate(5.2,233.81) scale(1,1.25)" font-size="5.85" text-anchor="start" fill="#333">Throughput</text></g></svg>
<div style="left:0px;top:852.4px;width:1280px;height:17.6px;background:#f0f0f0;"></div>
<div style="left:0px;top:852.2px;width:1280px;height:2.2px;background:#b2b2b2;"></div>
<span class="t s" style="top:863.6px;left:6px;color:#111;font-size:9.1px;">Pairs: 4</span>
<span class="t s" style="top:863.6px;left:64.4px;color:#111;font-size:9.1px;">Start: 2019/5/27, 12:45:52</span>
<span class="t s" style="top:863.6px;left:256.6px;color:#111;font-size:9.1px;">Ixia Configuratic</span>
<span class="t s" style="top:863.6px;left:338.6px;color:#111;font-size:9.1px;">End: 2019/5/27, 12:46:11</span>
<span class="t s" style="top:863.6px;left:452.6px;color:#111;font-size:9.1px;">Run time: 00:00:19</span>
<span class="t s" style="top:863.6px;left:541.2px;color:#111;font-size:9.1px;">Ran to completion</span>
<div style="left:57.2px;top:856px;width:0.8px;height:11.6px;background:#c8c8c8;"></div>
<div style="left:250.8px;top:856px;width:0.8px;height:11.6px;background:#c8c8c8;"></div>
<div style="left:332.8px;top:856px;width:0.8px;height:11.6px;background:#c8c8c8;"></div>
<div style="left:448px;top:856px;width:0.8px;height:11.6px;background:#c8c8c8;"></div>
<div style="left:536.6px;top:856px;width:0.8px;height:11.6px;background:#c8c8c8;"></div>
<div style="left:620.6px;top:856px;width:0.8px;height:11.6px;background:#c8c8c8;"></div>
</div></body></html>
